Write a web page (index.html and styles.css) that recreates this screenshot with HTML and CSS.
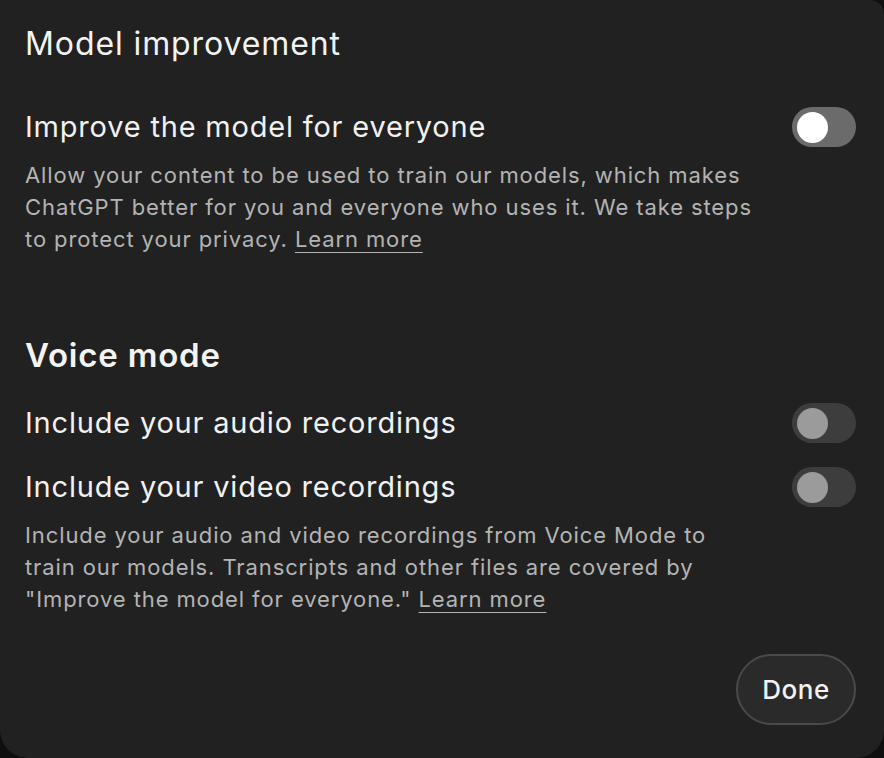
FILE: index.html
```html
<!DOCTYPE html>
<html>
<head>
<meta charset="utf-8">
<link rel="stylesheet" href="styles.css">
</head>
<body>
<div class="panel">
  <h1 class="title">Model improvement</h1>
  <div class="row first">
    <div class="label">Improve the model for everyone</div>
    <div class="toggle on"><span class="knob"></span></div>
  </div>
  <p class="desc desc-top">Allow your content to be used to train our models, which makes ChatGPT better for you and everyone who uses it. We take steps to protect your privacy. <a class="link">Learn more</a></p>

  <h2 class="section">Voice mode</h2>
  <div class="row">
    <div class="label">Include your audio recordings</div>
    <div class="toggle"><span class="knob"></span></div>
  </div>
  <div class="row">
    <div class="label">Include your video recordings</div>
    <div class="toggle"><span class="knob"></span></div>
  </div>
  <p class="desc desc-voice">Include your audio and video recordings from Voice Mode to train our models. Transcripts and other files are covered by "Improve the model for everyone." <a class="link">Learn more</a></p>

  <div class="actions">
    <button class="done">Done</button>
  </div>
</div>
</body>
</html>
```

FILE: styles.css
```css
html, body {
  margin: 0;
  padding: 0;
  background: #0f0f0f;
}
body {
  width: 884px;
  height: 758px;
  overflow: hidden;
  font-family: Inter, "Noto Sans", sans-serif;
}
.panel {
  box-sizing: border-box;
  width: 884px;
  height: 758px;
  background: #212121;
  border-radius: 0 14px 28px 28px;
  padding: 22px 28px 0 25px;
  color: #ececec;
}
.title {
  margin: 0;
  font-size: 32px;
  font-weight: 400;
  letter-spacing: 0.9px;
  line-height: 44px;
  color: #f3f3f3;
}
.row {
  display: flex;
  justify-content: space-between;
  align-items: center;
  height: 64px;
}
.row.first {
  margin-top: 39px;
  height: 44px;
}
.label {
  font-size: 29px;
  letter-spacing: 0.8px;
  line-height: 40px;
  color: #f1f1f1;
}
.toggle {
  width: 64px;
  height: 40px;
  border-radius: 20px;
  background: #3d3d3d;
  display: flex;
  align-items: center;
  padding-left: 5px;
  box-sizing: border-box;
}
.toggle .knob {
  width: 31px;
  height: 31px;
  border-radius: 50%;
  background: #9b9b9b;
}
.toggle.on {
  background: #6b6b6b;
}
.toggle.on .knob {
  background: #ffffff;
}
.desc {
  margin: 0;
  width: 734px;
  font-size: 22px;
  letter-spacing: 0.9px;
  line-height: 32px;
  color: #b4b4b4;
}
.desc-top {
  margin-top: 10px;
}
.desc-voice {
  margin-top: 0;
}
.link {
  color: #b4b4b4;
  text-decoration: underline;
  text-underline-offset: 5px;
  text-decoration-thickness: 1px;
}
.section {
  margin: 80px 0 16px;
  font-size: 33px;
  font-weight: 600;
  letter-spacing: 0.8px;
  line-height: 40px;
  color: #f3f3f3;
}
.actions {
  display: flex;
  justify-content: flex-end;
  margin-top: 39px;
}
.done {
  width: 120px;
  height: 71px;
  border-radius: 36px;
  border: 2px solid #4a4a4a;
  background: #2a2a2a;
  color: #f3f3f3;
  font-family: Inter, "Noto Sans", sans-serif;
  font-size: 26px;
  letter-spacing: 0.5px;
  font-weight: 500;
}
```
